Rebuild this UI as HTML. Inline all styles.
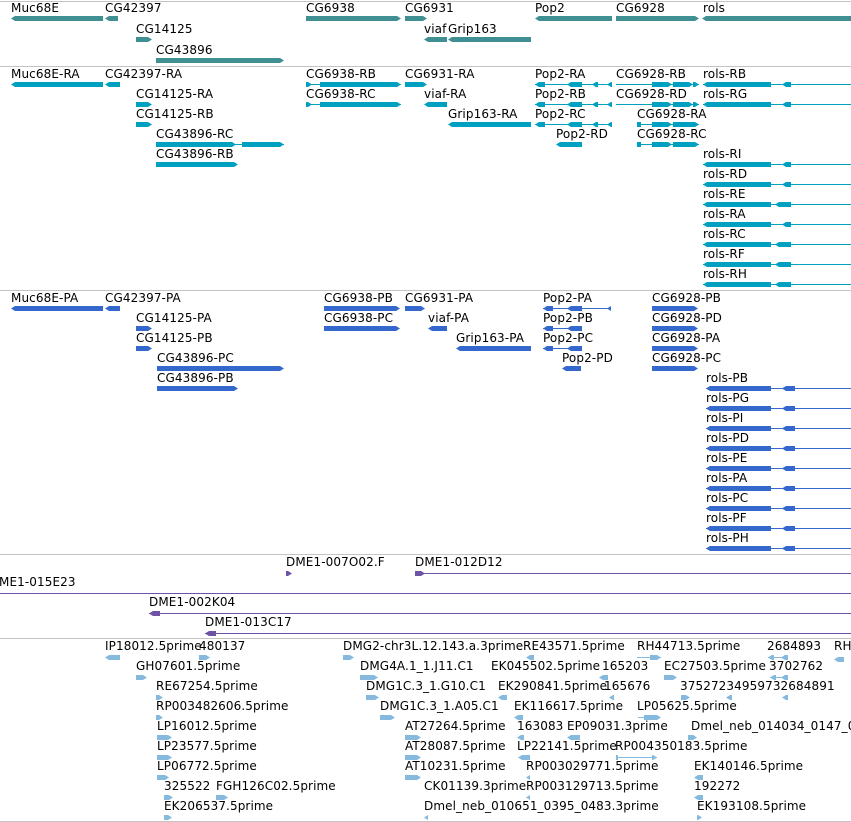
<!DOCTYPE html>
<html><head><meta charset="utf-8"><style>
body{margin:0;width:851px;height:822px;position:relative;background:#fff;overflow:hidden}
.L{position:absolute;font:12px/13px "DejaVu Sans","Liberation Sans",sans-serif;white-space:nowrap;color:#000;letter-spacing:0.1px}
.B{position:absolute;height:5px}
.n{position:absolute;height:1px}
.s{position:absolute;left:0;width:851px;height:1px;background:#c4c4c4}
.g{background:#3f8f93}.r{background:#00a0c0}.p{background:#3468cc}.c{background:#6d52a6}.e{background:#86b9de}
.lf{clip-path:polygon(0 50%,4px 0,100% 0,100% 100%,4px 100%)}
.rt{clip-path:polygon(0 0,calc(100% - 4px) 0,100% 50%,calc(100% - 4px) 100%,0 100%)}
</style></head><body>
<div class="s" style="top:1px"></div>
<div class="s" style="top:66px"></div>
<div class="s" style="top:290px"></div>
<div class="s" style="top:554px"></div>
<div class="s" style="top:638px"></div>
<div class="s" style="top:821px"></div>

<!-- genes -->
<div class="L" style="left:11px;top:2px">Muc68E</div><div class="B g lf" style="left:11px;top:16px;width:92px"></div>
<div class="L" style="left:105px;top:2px">CG42397</div><div class="B g lf" style="left:105px;top:16px;width:13px"></div>
<div class="L" style="left:136px;top:23px">CG14125</div><div class="B g rt" style="left:136px;top:37px;width:16px"></div>
<div class="L" style="left:156px;top:44px">CG43896</div><div class="B g rt" style="left:156px;top:58px;width:128px"></div>
<div class="L" style="left:306px;top:2px">CG6938</div><div class="B g rt" style="left:306px;top:16px;width:95px"></div>
<div class="L" style="left:405px;top:2px">CG6931</div><div class="B g rt" style="left:405px;top:16px;width:22px"></div>
<div class="L" style="left:424px;top:23px">viaf</div><div class="B g lf" style="left:424px;top:37px;width:23px"></div>
<div class="L" style="left:448px;top:23px">Grip163</div><div class="B g lf" style="left:448px;top:37px;width:83px"></div>
<div class="L" style="left:535px;top:2px">Pop2</div><div class="B g lf" style="left:535px;top:16px;width:77px"></div>
<div class="L" style="left:616px;top:2px">CG6928</div><div class="B g rt" style="left:616px;top:16px;width:83px"></div>
<div class="L" style="left:703px;top:2px">rols</div><div class="B g lf" style="left:702px;top:16px;width:149px"></div>

<!-- transcripts -->
<div class="L" style="left:11px;top:68px">Muc68E-RA</div><div class="B r lf" style="left:11px;top:82px;width:92px"></div>
<div class="L" style="left:105px;top:68px">CG42397-RA</div><div class="B r lf" style="left:105px;top:82px;width:15px"></div>
<div class="L" style="left:306px;top:68px">CG6938-RB</div><div class="n r" style="left:306px;top:84px;width:95px"></div><div class="B r rt" style="left:306px;top:82px;width:6px"></div><div class="B r rt" style="left:320px;top:82px;width:81px"></div>
<div class="L" style="left:405px;top:68px">CG6931-RA</div><div class="B r rt" style="left:405px;top:82px;width:22px"></div>
<div class="L" style="left:535px;top:68px">Pop2-RA</div><div class="n r" style="left:535px;top:84px;width:77px"></div><div class="B r lf" style="left:535px;top:82px;width:10px"></div><div class="B r lf" style="left:567px;top:82px;width:15px"></div><div class="B r lf" style="left:592px;top:82px;width:6px"></div><div class="B r lf" style="left:607px;top:82px;width:5px"></div>
<div class="L" style="left:616px;top:68px">CG6928-RB</div><div class="n r" style="left:616px;top:84px;width:83px"></div><div class="B r rt" style="left:652px;top:82px;width:20px"></div><div class="B r rt" style="left:673px;top:82px;width:20px"></div><div class="B r rt" style="left:693px;top:82px;width:6px"></div>
<div class="L" style="left:703px;top:68px">rols-RB</div>
<div class="L" style="left:136px;top:88px">CG14125-RA</div><div class="B r rt" style="left:136px;top:102px;width:16px"></div>
<div class="L" style="left:306px;top:88px">CG6938-RC</div><div class="n r" style="left:306px;top:104px;width:95px"></div><div class="B r rt" style="left:306px;top:102px;width:6px"></div><div class="B r rt" style="left:320px;top:102px;width:81px"></div>
<div class="L" style="left:424px;top:88px">viaf-RA</div><div class="B r lf" style="left:424px;top:102px;width:23px"></div>
<div class="L" style="left:535px;top:88px">Pop2-RB</div><div class="n r" style="left:535px;top:104px;width:77px"></div><div class="B r lf" style="left:535px;top:102px;width:10px"></div><div class="B r lf" style="left:567px;top:102px;width:15px"></div><div class="B r lf" style="left:592px;top:102px;width:6px"></div><div class="B r lf" style="left:607px;top:102px;width:5px"></div>
<div class="L" style="left:616px;top:88px">CG6928-RD</div><div class="n r" style="left:616px;top:104px;width:83px"></div><div class="B r rt" style="left:652px;top:102px;width:20px"></div><div class="B r rt" style="left:673px;top:102px;width:20px"></div><div class="B r rt" style="left:693px;top:102px;width:6px"></div>
<div class="L" style="left:703px;top:88px">rols-RG</div>
<div class="L" style="left:136px;top:108px">CG14125-RB</div><div class="B r rt" style="left:136px;top:122px;width:16px"></div>
<div class="L" style="left:448px;top:108px">Grip163-RA</div><div class="B r lf" style="left:448px;top:122px;width:83px"></div>
<div class="L" style="left:535px;top:108px">Pop2-RC</div><div class="n r" style="left:535px;top:124px;width:77px"></div><div class="B r lf" style="left:535px;top:122px;width:10px"></div><div class="B r lf" style="left:567px;top:122px;width:15px"></div><div class="B r lf" style="left:592px;top:122px;width:6px"></div><div class="B r lf" style="left:607px;top:122px;width:5px"></div>
<div class="L" style="left:637px;top:108px">CG6928-RA</div><div class="n r" style="left:637px;top:124px;width:62px"></div><div class="B r rt" style="left:652px;top:122px;width:20px"></div><div class="B r rt" style="left:673px;top:122px;width:26px"></div><div class="B r" style="left:637px;top:122px;width:4px"></div>
<div class="L" style="left:156px;top:128px">CG43896-RC</div><div class="n r" style="left:156px;top:144px;width:128px"></div><div class="B r rt" style="left:156px;top:142px;width:80px"></div><div class="B r rt" style="left:242px;top:142px;width:42px"></div>
<div class="L" style="left:556px;top:128px">Pop2-RD</div><div class="B r lf" style="left:556px;top:142px;width:26px"></div>
<div class="L" style="left:637px;top:128px">CG6928-RC</div><div class="n r" style="left:637px;top:144px;width:62px"></div><div class="B r rt" style="left:652px;top:142px;width:20px"></div><div class="B r rt" style="left:673px;top:142px;width:26px"></div><div class="B r" style="left:637px;top:142px;width:4px"></div>
<div class="L" style="left:156px;top:148px">CG43896-RB</div><div class="B r rt" style="left:156px;top:162px;width:82px"></div>
<div class="L" style="left:703px;top:148px">rols-RI</div>
<div class="L" style="left:703px;top:168px">rols-RD</div>
<div class="L" style="left:703px;top:188px">rols-RE</div>
<div class="L" style="left:703px;top:208px">rols-RA</div>
<div class="L" style="left:703px;top:228px">rols-RC</div>
<div class="L" style="left:703px;top:248px">rols-RF</div>
<div class="L" style="left:703px;top:268px">rols-RH</div>

<div class="n r" style="left:703px;top:84px;width:148px"></div><div class="B r lf" style="left:703px;top:82px;width:68px"></div><div class="B r lf" style="left:782px;top:82px;width:9px"></div>
<div class="n r" style="left:703px;top:104px;width:148px"></div><div class="B r lf" style="left:703px;top:102px;width:68px"></div><div class="B r lf" style="left:782px;top:102px;width:9px"></div>
<div class="n r" style="left:703px;top:164px;width:148px"></div><div class="B r lf" style="left:703px;top:162px;width:68px"></div><div class="B r lf" style="left:782px;top:162px;width:9px"></div>
<div class="n r" style="left:703px;top:184px;width:148px"></div><div class="B r lf" style="left:703px;top:182px;width:68px"></div><div class="B r lf" style="left:782px;top:182px;width:9px"></div>
<div class="n r" style="left:703px;top:204px;width:148px"></div><div class="B r lf" style="left:703px;top:202px;width:68px"></div><div class="B r lf" style="left:775px;top:202px;width:16px"></div>
<div class="n r" style="left:703px;top:224px;width:148px"></div><div class="B r lf" style="left:703px;top:222px;width:68px"></div><div class="B r lf" style="left:782px;top:222px;width:9px"></div>
<div class="n r" style="left:703px;top:244px;width:148px"></div><div class="B r lf" style="left:703px;top:242px;width:68px"></div><div class="B r lf" style="left:775px;top:242px;width:16px"></div>
<div class="n r" style="left:703px;top:264px;width:148px"></div><div class="B r lf" style="left:703px;top:262px;width:68px"></div><div class="B r lf" style="left:775px;top:262px;width:16px"></div>
<div class="n r" style="left:703px;top:284px;width:148px"></div><div class="B r lf" style="left:703px;top:282px;width:68px"></div><div class="B r lf" style="left:775px;top:282px;width:16px"></div>

<!-- proteins -->
<div class="L" style="left:11px;top:292px">Muc68E-PA</div><div class="B p lf" style="left:11px;top:306px;width:92px"></div>
<div class="L" style="left:105px;top:292px">CG42397-PA</div><div class="B p lf" style="left:105px;top:306px;width:15px"></div>
<div class="L" style="left:324px;top:292px">CG6938-PB</div><div class="B p rt" style="left:324px;top:306px;width:76px"></div>
<div class="L" style="left:405px;top:292px">CG6931-PA</div><div class="B p rt" style="left:405px;top:306px;width:20px"></div>
<div class="L" style="left:543px;top:292px">Pop2-PA</div><div class="n p" style="left:543px;top:308px;width:68px"></div><div class="B p lf" style="left:543px;top:306px;width:10px"></div><div class="B p lf" style="left:567px;top:306px;width:15px"></div><div class="B p lf" style="left:607px;top:306px;width:4px"></div>
<div class="L" style="left:652px;top:292px">CG6928-PB</div><div class="B p rt" style="left:652px;top:306px;width:46px"></div>
<div class="L" style="left:136px;top:312px">CG14125-PA</div><div class="B p rt" style="left:136px;top:326px;width:16px"></div>
<div class="L" style="left:324px;top:312px">CG6938-PC</div><div class="B p rt" style="left:324px;top:326px;width:76px"></div>
<div class="L" style="left:428px;top:312px">viaf-PA</div><div class="B p lf" style="left:428px;top:326px;width:19px"></div>
<div class="L" style="left:543px;top:312px">Pop2-PB</div><div class="n p" style="left:543px;top:328px;width:39px"></div><div class="B p lf" style="left:543px;top:326px;width:10px"></div><div class="B p lf" style="left:567px;top:326px;width:15px"></div>
<div class="L" style="left:652px;top:312px">CG6928-PD</div><div class="B p rt" style="left:652px;top:326px;width:46px"></div>
<div class="L" style="left:136px;top:332px">CG14125-PB</div><div class="B p rt" style="left:136px;top:346px;width:16px"></div>
<div class="L" style="left:456px;top:332px">Grip163-PA</div><div class="B p lf" style="left:456px;top:346px;width:75px"></div>
<div class="L" style="left:543px;top:332px">Pop2-PC</div><div class="n p" style="left:543px;top:348px;width:39px"></div><div class="B p lf" style="left:543px;top:346px;width:10px"></div><div class="B p lf" style="left:567px;top:346px;width:15px"></div>
<div class="L" style="left:652px;top:332px">CG6928-PA</div><div class="B p rt" style="left:652px;top:346px;width:46px"></div>
<div class="L" style="left:157px;top:352px">CG43896-PC</div><div class="B p rt" style="left:157px;top:366px;width:127px"></div>
<div class="L" style="left:562px;top:352px">Pop2-PD</div><div class="B p lf" style="left:562px;top:366px;width:19px"></div>
<div class="L" style="left:652px;top:352px">CG6928-PC</div><div class="B p rt" style="left:652px;top:366px;width:46px"></div>
<div class="L" style="left:157px;top:372px">CG43896-PB</div><div class="B p rt" style="left:157px;top:386px;width:81px"></div>
<div class="L" style="left:706px;top:372px">rols-PB</div>
<div class="L" style="left:706px;top:392px">rols-PG</div>
<div class="L" style="left:706px;top:412px">rols-PI</div>
<div class="L" style="left:706px;top:432px">rols-PD</div>
<div class="L" style="left:706px;top:452px">rols-PE</div>
<div class="L" style="left:706px;top:472px">rols-PA</div>
<div class="L" style="left:706px;top:492px">rols-PC</div>
<div class="L" style="left:706px;top:512px">rols-PF</div>
<div class="L" style="left:706px;top:532px">rols-PH</div>
<div class="n p" style="left:706px;top:388px;width:145px"></div><div class="B p lf" style="left:706px;top:386px;width:65px"></div><div class="B p lf" style="left:782px;top:386px;width:13px"></div>
<div class="n p" style="left:706px;top:408px;width:145px"></div><div class="B p lf" style="left:706px;top:406px;width:65px"></div><div class="B p lf" style="left:782px;top:406px;width:13px"></div>
<div class="n p" style="left:706px;top:428px;width:145px"></div><div class="B p lf" style="left:706px;top:426px;width:65px"></div><div class="B p lf" style="left:782px;top:426px;width:13px"></div>
<div class="n p" style="left:706px;top:448px;width:145px"></div><div class="B p lf" style="left:706px;top:446px;width:65px"></div><div class="B p lf" style="left:782px;top:446px;width:13px"></div>
<div class="n p" style="left:706px;top:468px;width:145px"></div><div class="B p lf" style="left:706px;top:466px;width:65px"></div><div class="B p lf" style="left:782px;top:466px;width:13px"></div>
<div class="n p" style="left:706px;top:488px;width:145px"></div><div class="B p lf" style="left:706px;top:486px;width:65px"></div><div class="B p lf" style="left:782px;top:486px;width:13px"></div>
<div class="n p" style="left:706px;top:508px;width:145px"></div><div class="B p lf" style="left:706px;top:506px;width:65px"></div><div class="B p lf" style="left:782px;top:506px;width:13px"></div>
<div class="n p" style="left:706px;top:528px;width:145px"></div><div class="B p lf" style="left:706px;top:526px;width:65px"></div><div class="B p lf" style="left:782px;top:526px;width:13px"></div>
<div class="n p" style="left:706px;top:548px;width:145px"></div><div class="B p lf" style="left:706px;top:546px;width:65px"></div><div class="B p lf" style="left:782px;top:546px;width:13px"></div>

<!-- clones -->
<div class="L" style="left:286px;top:556px">DME1-007O02.F</div><div class="B c rt" style="left:286px;top:571px;width:6px"></div>
<div class="L" style="left:415px;top:556px">DME1-012D12</div><div class="B c rt" style="left:415px;top:571px;width:10px"></div><div class="n c" style="left:415px;top:573px;width:436px"></div>
<div class="L" style="left:-1px;top:576px">ME1-015E23</div><div class="n c" style="left:0;top:593px;width:851px"></div>
<div class="L" style="left:149px;top:596px">DME1-002K04</div><div class="B c lf" style="left:149px;top:611px;width:11px"></div><div class="n c" style="left:149px;top:613px;width:702px"></div>
<div class="L" style="left:205px;top:616px">DME1-013C17</div><div class="B c lf" style="left:205px;top:631px;width:11px"></div><div class="n c" style="left:205px;top:633px;width:646px"></div>

<!-- ESTs -->
<div class="L" style="left:105px;top:640px">IP18012.5prime</div><div class="B e lf" style="left:105px;top:655px;width:15px"></div>
<div class="L" style="left:199px;top:640px">480137</div><div class="B e rt" style="left:199px;top:655px;width:11px"></div>
<div class="L" style="left:343px;top:640px">DMG2-chr3L.12.143.a.3prime</div><div class="B e rt" style="left:343px;top:655px;width:11px"></div>
<div class="L" style="left:523px;top:640px">RE43571.5prime</div><div class="B e lf" style="left:526px;top:655px;width:8px"></div>
<div class="L" style="left:637px;top:640px">RH44713.5prime</div><div class="n e" style="left:637px;top:657px;width:24px"></div><div class="B e rt" style="left:650px;top:655px;width:11px"></div>
<div class="L" style="left:767px;top:640px">2684893</div><div class="n e" style="left:768px;top:657px;width:20px"></div><div class="B e lf" style="left:768px;top:655px;width:6px"></div><div class="B e lf" style="left:781px;top:655px;width:7px"></div>
<div class="L" style="left:834px;top:640px">RH</div><div class="B e lf" style="left:834px;top:657px;width:10px"></div>
<div class="L" style="left:136px;top:660px">GH07601.5prime</div><div class="B e rt" style="left:136px;top:675px;width:11px"></div>
<div class="L" style="left:360px;top:660px">DMG4A.1_1.J11.C1</div><div class="B e rt" style="left:360px;top:675px;width:18px"></div>
<div class="L" style="left:491px;top:660px">EK045502.5prime</div>
<div class="L" style="left:602px;top:660px">165203</div><div class="B e lf" style="left:599px;top:675px;width:9px"></div>
<div class="L" style="left:664px;top:660px">EC27503.5prime</div><div class="B e rt" style="left:664px;top:675px;width:13px"></div>
<div class="L" style="left:769px;top:660px">3702762</div><div class="n e" style="left:770px;top:677px;width:18px"></div><div class="B e lf" style="left:770px;top:675px;width:6px"></div><div class="B e lf" style="left:781px;top:675px;width:7px"></div>
<div class="L" style="left:156px;top:680px">RE67254.5prime</div><div class="B e rt" style="left:156px;top:695px;width:7px"></div>
<div class="L" style="left:366px;top:680px">DMG1C.3_1.G10.C1</div><div class="B e rt" style="left:366px;top:695px;width:13px"></div>
<div class="L" style="left:498px;top:680px">EK290841.5prime</div><div class="B e lf" style="left:498px;top:695px;width:9px"></div>
<div class="L" style="left:604px;top:680px">165676</div><div class="B e lf" style="left:609px;top:695px;width:5px"></div>
<div class="L" style="left:680px;top:680px">37527234959732684891</div><div class="B e rt" style="left:681px;top:695px;width:9px"></div><div class="B e lf" style="left:726px;top:695px;width:6px"></div><div class="B e lf" style="left:782px;top:695px;width:6px"></div>
<div class="L" style="left:156px;top:700px">RP003482606.5prime</div><div class="B e rt" style="left:156px;top:715px;width:7px"></div>
<div class="L" style="left:380px;top:700px">DMG1C.3_1.A05.C1</div><div class="B e rt" style="left:380px;top:715px;width:15px"></div>
<div class="L" style="left:514px;top:700px">EK116617.5prime</div><div class="B e lf" style="left:514px;top:715px;width:9px"></div>
<div class="L" style="left:637px;top:700px">LP05625.5prime</div><div class="n e" style="left:638px;top:717px;width:22px"></div><div class="B e rt" style="left:644px;top:715px;width:17px"></div>
<div class="L" style="left:157px;top:720px">LP16012.5prime</div><div class="B e rt" style="left:157px;top:735px;width:15px"></div>
<div class="L" style="left:405px;top:720px">AT27264.5prime</div><div class="B e rt" style="left:405px;top:735px;width:16px"></div>
<div class="L" style="left:517px;top:720px">163083</div><div class="B e lf" style="left:517px;top:735px;width:7px"></div>
<div class="L" style="left:567px;top:720px">EP09031.3prime</div><div class="B e lf" style="left:567px;top:735px;width:13px"></div>
<div class="L" style="left:691px;top:720px">Dmel_neb_014034_0147_0</div><div class="B e rt" style="left:688px;top:735px;width:9px"></div>
<div class="L" style="left:157px;top:740px">LP23577.5prime</div><div class="B e rt" style="left:157px;top:755px;width:15px"></div>
<div class="L" style="left:405px;top:740px">AT28087.5prime</div><div class="B e rt" style="left:405px;top:755px;width:16px"></div>
<div class="L" style="left:517px;top:740px">LP22141.5prime</div><div class="B e lf" style="left:518px;top:755px;width:12px"></div>
<div class="L" style="left:615px;top:740px">RP004350183.5prime</div><div class="n e" style="left:616px;top:757px;width:41px"></div><div class="B e" style="left:616px;top:755px;width:2px"></div><div class="B e rt" style="left:652px;top:755px;width:5px"></div>
<div class="L" style="left:157px;top:760px">LP06772.5prime</div><div class="B e rt" style="left:157px;top:775px;width:12px"></div>
<div class="L" style="left:405px;top:760px">AT10231.5prime</div><div class="B e rt" style="left:405px;top:775px;width:16px"></div>
<div class="L" style="left:526px;top:760px">RP003029771.5prime</div><div class="B e lf" style="left:526px;top:775px;width:4px"></div>
<div class="L" style="left:694px;top:760px">EK140146.5prime</div><div class="B e lf" style="left:694px;top:775px;width:9px"></div>
<div class="L" style="left:164px;top:780px">325522</div><div class="B e rt" style="left:164px;top:795px;width:9px"></div>
<div class="L" style="left:216px;top:780px">FGH126C02.5prime</div><div class="B e rt" style="left:216px;top:795px;width:12px"></div>
<div class="L" style="left:424px;top:780px">CK01139.3prime</div>
<div class="L" style="left:526px;top:780px">RP003129713.5prime</div><div class="B e lf" style="left:526px;top:795px;width:4px"></div>
<div class="L" style="left:694px;top:780px">192272</div><div class="B e lf" style="left:694px;top:795px;width:9px"></div>
<div class="L" style="left:164px;top:800px">EK206537.5prime</div><div class="B e rt" style="left:164px;top:815px;width:8px"></div>
<div class="L" style="left:424px;top:800px">Dmel_neb_010651_0395_0483.3prime</div><div class="B e lf" style="left:424px;top:815px;width:4px"></div>
<div class="L" style="left:697px;top:800px">EK193108.5prime</div><div class="B e rt" style="left:697px;top:815px;width:5px"></div>
</body></html>
